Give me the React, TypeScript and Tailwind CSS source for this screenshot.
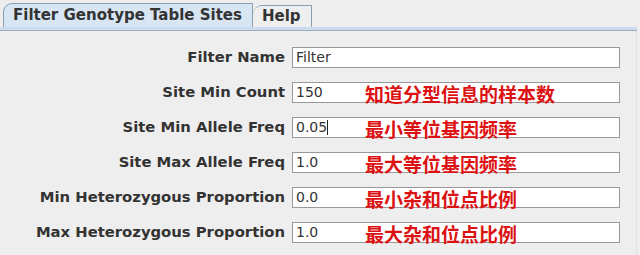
const rows = [
  { label: 'Filter Name', value: 'Filter', note: '' },
  { label: 'Site Min Count', value: '150', note: '知道分型信息的样本数' },
  { label: 'Site Min Allele Freq', value: '0.05', note: '最小等位基因频率', caret: true },
  { label: 'Site Max Allele Freq', value: '1.0', note: '最大等位基因频率' },
  { label: 'Min Heterozygous Proportion', value: '0.0', note: '最小杂和位点比例' },
  { label: 'Max Heterozygous Proportion', value: '1.0', note: '最大杂和位点比例' },
];

export default function App() {
  return (
    <div className="w-[640px] h-[255px] overflow-hidden bg-[#eeeeee] text-[#333333] font-['DejaVu_Sans',sans-serif]">
      {/* Tabs */}
      <div className="flex items-end h-[27px] pl-[3px]">
        <div className="h-[24px] pl-[9px] pr-[10px] flex items-center bg-[#d8e5f2] border border-b-0 border-[#8a9db3] rounded-tl-[9px] text-[15px] font-bold">
          Filter Genotype Table Sites
        </div>
        <div className="h-[22px] pl-[9px] pr-[10px] flex items-center bg-[#eeeeee] border border-l-0 border-b-0 border-[#8a9db3] rounded-tl-[9px] text-[15px] font-bold">
          Help
        </div>
      </div>
      <div className="w-[637px] h-[4px] bg-[#c9dbec] border-b border-[#9fadbb]" />

      {/* Form */}
      <div className="w-[637px] pt-[16px] flex flex-col gap-[14px] border-r border-[#e2e2e2] h-[224px]">
        {rows.map((r) => (
          <div key={r.label} className="flex items-center h-[21px]">
            <div className="w-[292px] pr-[7px] text-right text-[14.8px] font-bold whitespace-nowrap">{r.label}</div>
            <div className="relative w-[328px] h-[21px] bg-white border border-[#999999] flex items-center pl-[3px] text-[14px] text-[#333333]">
              <span>{r.value}</span>
              {r.caret && <span className="w-px h-[15px] bg-[#222222]" />}
              {r.note && (
                <span className="absolute left-[72px] top-[1px] text-[19px] leading-[20px] font-bold text-[#dc1212] font-['Noto_Sans_CJK_SC',sans-serif]">
                  {r.note}
                </span>
              )}
            </div>
          </div>
        ))}
      </div>
    </div>
  );
}
